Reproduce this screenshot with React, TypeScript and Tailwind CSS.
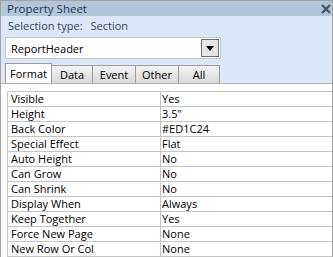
import React from "react";

const rows: [string, string][] = [
  ["Visible", "Yes"],
  ["Height", "3.5\""],
  ["Back Color", "#ED1C24"],
  ["Special Effect", "Flat"],
  ["Auto Height", "No"],
  ["Can Grow", "No"],
  ["Can Shrink", "No"],
  ["Display When", "Always"],
  ["Keep Together", "Yes"],
  ["Force New Page", "None"],
  ["New Row Or Col", "None"],
];

const tabs = [
  { label: "Format", w: "w-[47px]" },
  { label: "Data", w: "w-[41px]" },
  { label: "Event", w: "w-[43px]" },
  { label: "Other", w: "w-[43px]" },
  { label: "All", w: "w-[41px]" },
];

export default function App() {
  return (
    <div className="w-[333px] h-[257px] overflow-hidden flex flex-col border-t border-l border-r border-[#a3a3a3] bg-white font-['Open_Sans','Noto_Sans',sans-serif] text-black">
      {/* Title bar */}
      <div className="h-[18px] bg-[#b2c5dc] flex items-center justify-between pl-[6px] pr-[1px]">
        <span className="text-[11.5px] leading-none text-[#26364b]">Property Sheet</span>
        <svg width="10" height="10" viewBox="0 0 10 10">
          <path d="M1 1L9 9M9 1L1 9" stroke="#4a5666" strokeWidth="2.4" />
        </svg>
      </div>

      {/* Header area */}
      <div className="bg-[#dce8f8] flex flex-col">
        <div className="h-[18px] flex items-center pl-[7px] text-[11px] leading-none text-[#33465c]">
          <span>Selection type:</span>
          <span className="ml-[8px]">Section</span>
        </div>
        <div className="mt-[3px] ml-[4px] w-[216px] h-[22px] bg-white border border-[#c2c6cc] flex items-center justify-between">
          <span className="pl-[5px] text-[11px] leading-none">ReportHeader</span>
          <div className="mr-[1px] w-[18px] h-[18px] border border-[#6f6f6f] bg-[#e6e6e6] flex items-center justify-center">
            <svg width="8" height="5" viewBox="0 0 8 5">
              <path d="M0 0H8L4 5Z" fill="#000" />
            </svg>
          </div>
        </div>
        <div className="h-[24px] flex items-end pl-[4px]">
          {tabs.map((t, i) =>
            i === 0 ? (
              <div
                key={t.label}
                className={`${t.w} h-[20px] bg-white border border-b-0 border-[#9c9c9c] flex items-center justify-center text-[11px] leading-none pb-[1px]`}
              >
                {t.label}
              </div>
            ) : (
              <div
                key={t.label}
                className={`${t.w} h-[18px] bg-gradient-to-b from-[#f3f3f3] to-[#d9d9d9] border border-b-0 border-l-0 border-[#9c9c9c] flex items-center justify-center text-[11px] leading-none`}
              >
                {t.label}
              </div>
            )
          )}
        </div>
      </div>

      {/* Content */}
      <div className="flex-1 bg-white border-t border-[#b5b5b5] pt-[7px] pl-[6px]">
        <div className="border-t border-l border-[#c4c4c4]">
          {rows.map(([k, v]) => (
            <div key={k} className="h-[15px] flex border-b border-[#c4c4c4] text-[11px] leading-[14px]">
              <div className="w-[153px] shrink-0 border-r border-[#c4c4c4] pl-[3px] flex items-center whitespace-nowrap">
                {k}
              </div>
              <div className="flex-1 pl-[1px] flex items-center whitespace-nowrap">{v}</div>
            </div>
          ))}
        </div>
      </div>
    </div>
  );
}
